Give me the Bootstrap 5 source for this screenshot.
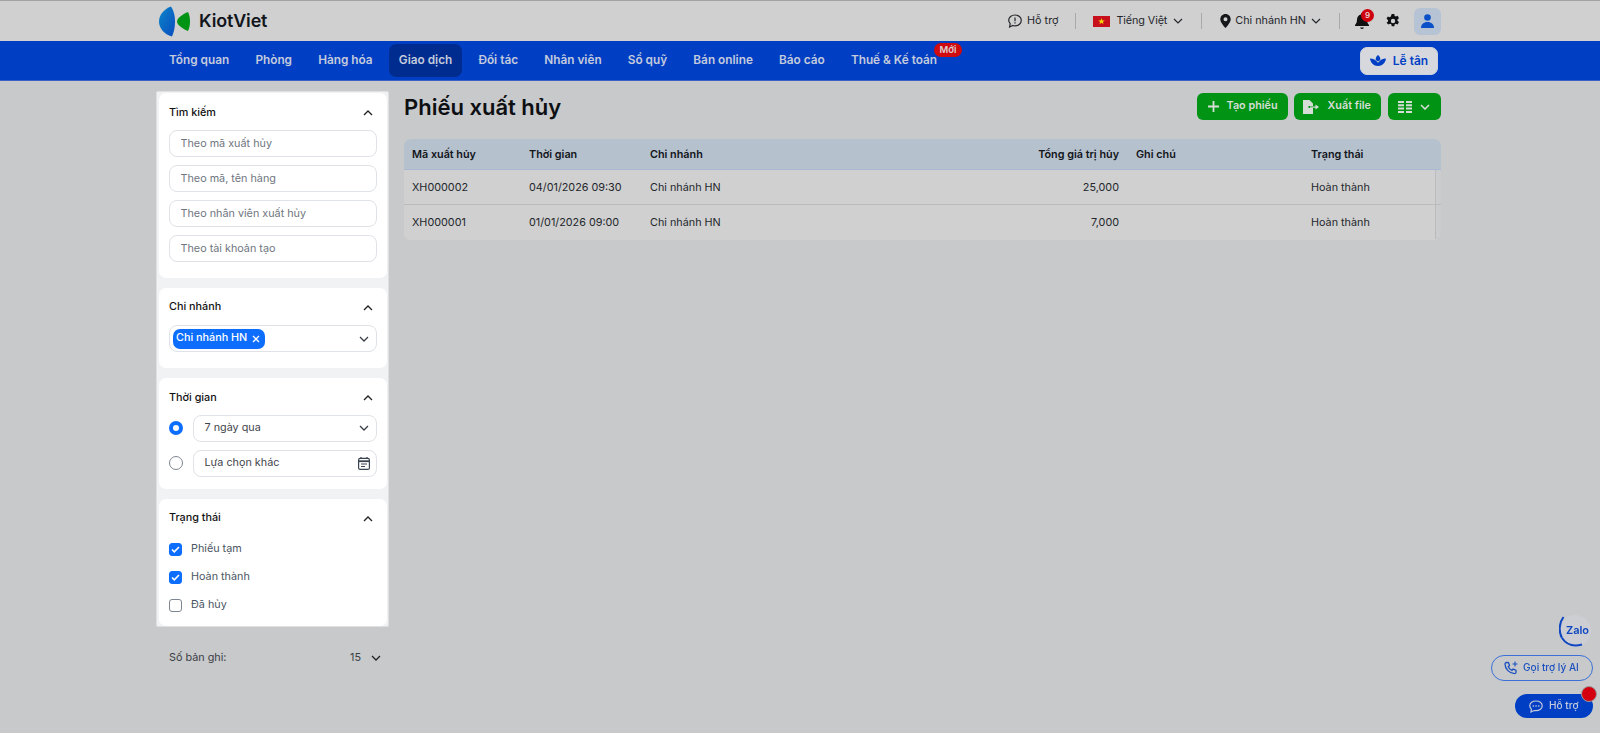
<!DOCTYPE html>
<html lang="vi"><head><meta charset="utf-8"><title>Phiếu xuất hủy</title>
<link href="https://cdn.jsdelivr.net/npm/bootstrap@5.3.0/dist/css/bootstrap.min.css" rel="stylesheet">
<style>
html,body{height:733px;overflow:hidden}
body{background:#c8c9cb;font-family:Inter,"Liberation Sans",sans-serif;font-size:10.8px;color:#1a1c20}
.wrap{width:1284px;margin-left:157px}
.topbar{height:41px;background:#d0d0d0;border-top:1px solid #a3a3a3}
.logo-text{font-size:17.900px;font-weight:600;color:#12161c;letter-spacing:-.1px}
.top-sep{width:1px;height:16px;background:#a9a9a9}
.top-item{font-size:10.8px;color:#24262b}
.avatar{width:27px;height:27px;border-radius:6px;background:#b6c3d4}
.notif{position:absolute;top:-4px;right:-5px;width:13px;height:13px;border-radius:50%;background:#d0000f;color:#e5d5d5;font-size:8px;font-weight:600;line-height:13px;text-align:center}
.mainnav{height:40px;background:#003fc4;border-bottom:1px solid #3c62c8}
.nav-lnk{padding:0 10px;height:33px;line-height:33px;font-size:11.800px;font-weight:600;color:#c4cbdc;border-radius:7px;margin-right:6.200px;position:relative;white-space:nowrap;text-decoration:none}
.nav-lnk.on{background:#002c90}
.new-tag{position:absolute;top:-1px;right:-15px;height:14px;width:28px;border-radius:8px;background:#cf0b10;color:#dccfd0;font-size:9.500px;font-weight:600;line-height:14px;text-align:center}
.recep{width:78px;height:28px;margin-right:3px;background:#d6d8de;border-radius:7px;color:#003fc4;font-size:12px;font-weight:600;border:1px solid #cdd2dc}
.side{width:233px;flex:none;margin-left:-1px}
.side-box{background:#f1f2f4;padding:1px 1px 0 2px;border:1px solid #dfe0e2;border-radius:2px}
.pane{background:#fff;border-radius:7px;padding:12px 10px;margin-bottom:10px}
.pane:last-child{margin-bottom:0}
.pane-h{display:flex;justify-content:space-between;align-items:center;font-weight:500;color:#111;font-size:10.8px;height:14px;padding:2px 4px 0 0;margin-bottom:10.500px}
.fld{height:27px;border:1px solid #dfe2e6;border-radius:8px;padding:0 7px 0 10.5px;color:#6f7680;font-size:10.8px;margin-bottom:8px;display:flex;align-items:center;justify-content:space-between;background:#fff;box-shadow:none}
.fld::placeholder{color:#6f7680;opacity:1}
.fld:focus{border-color:#dfe2e6;box-shadow:none}
.fld-dark{color:#3f444c}
.tag{background:#0d6efd;color:#fff;font-weight:500;height:20px;border-radius:7px;padding:0 5px 0 3px;display:flex;align-items:center;gap:5px}
.rad{width:14px;height:14px;border-radius:50%;border:1px solid #7d8590;flex:none}
.rad.on{border:4px solid #0d6efd}
.rad-row{display:flex;align-items:center;gap:10px;margin-bottom:8px}
.rad-row:last-child{margin-bottom:0}
.rad-row .fld{margin-bottom:0;flex-grow:1}
.chk{width:13px;height:13px;border-radius:3px;border:1px solid #7d8590;flex:none;background:#fff;display:flex;align-items:center;justify-content:center}
.chk.on{background:#0d6efd;border-color:#0d6efd}
.chk-row{display:flex;align-items:center;gap:9px;height:14px;margin-bottom:13.800px;color:#4b5563}
.chk-row:last-child{margin-bottom:0}
.pager{height:14px;margin-top:24px;padding:0 8px 0 13px;color:#3a3e45}
.main-col{margin-left:15px;flex:1;padding-top:2px}
.ptitle{font-size:22px;font-weight:600;color:#0d0f12;line-height:27px;margin:1px 0 0}
.gbtn{height:27px;border-radius:6px;background:#009314;color:#d6ddd6;font-size:10.8px;font-weight:600;border:0;padding:0 10px;display:flex;align-items:center;gap:8px;white-space:nowrap}
.tbl-box{margin-top:19px;border-radius:7px;overflow:hidden;background:#d0d0d0;height:101px}
.tbl{table-layout:fixed;width:1037px;margin:0;--bs-table-bg:transparent;font-size:10.8px}
.tbl th{height:30px;background:#b6c1ce;font-weight:600;color:#12151a;padding:3px 8px 0;vertical-align:middle;border-bottom:1px solid #aab8d2}
.tbl td{height:35px;padding:3px 8px 0;color:#24272c;vertical-align:middle;border-bottom:1px solid #b9bbbf;background:#d0d0d0}
.tbl th:nth-child(n+5),.tbl td:nth-child(n+5){padding-left:9px}
.tbl tr:last-child td{border-bottom:0}
.tbl td:last-child{box-shadow:inset -5px 0 0 #cbcccd,inset -6px 0 0 #b9bbbf}
.zalo{position:fixed;left:1559px;top:615px;width:32px;height:32px;border-radius:50%;background:#cdced3}
.zalo span{position:absolute;left:7px;top:8px;color:#0f47c0;font-size:11px;font-weight:600;line-height:14px}
.ai-btn{position:fixed;left:1491px;top:655px;width:102px;height:26px;border:1px solid #3a70d8;border-radius:13px;color:#1a50c0;font-size:10.1px;font-weight:500;display:flex;align-items:center;gap:4px;padding-left:12px}
.help-btn{position:fixed;left:1515px;top:694px;width:78px;height:24px;border-radius:12px;background:#003fc4;color:#c4cbdc;font-size:10.1px;font-weight:500;display:flex;align-items:center;gap:6px;padding-left:14px}
.dot{position:absolute;right:-4px;top:-8px;width:16px;height:16px;border-radius:50%;background:#d5000f;border:1px solid #9a9a9a}
</style></head><body>
<div class="topbar"><div class="wrap d-flex align-items-center h-100">
 <div class="d-flex align-items-center" style="gap:9px;margin-left:2px">
  <svg width="31" height="31" viewBox="0 0 31 31"><defs><linearGradient id="g1" x1="0" y1="0" x2="1" y2="1"><stop offset="0" stop-color="#0a86c8"/><stop offset="1" stop-color="#0a4cc0"/></linearGradient></defs><path d="M12 .5C15 5 16 10 16 15.500S15 26 13 30.500C5 28.500 0 22 0 15.500S5 3 12 .5Z" fill="url(#g1)"/><path d="M29 6c1.500 3 2 6.500 2 9.500s-.5 6.500-2 9.500c-5-2-11-6-11-9.500S24 8 29 6Z" fill="#009314"/></svg>
  <span class="logo-text">KiotViet</span>
 </div>
 <div class="ms-auto d-flex align-items-center top-item">
  <svg width="14" height="14" viewBox="0 0 14 14" fill="none" stroke="#24262b" stroke-width="1.200"><path d="M7 1C3.500 1 .7 3.300.7 6.300c0 1.300.6 2.500 1.500 3.400L1.600 13l3.200-1.500c.7.200 1.400.300 2.200.300 3.500 0 6.300-2.400 6.300-5.500S10.500 1 7 1Z"/><path d="M7 3.500v3.700M7 8.300v1.300"/></svg>
  <span style="margin-left:5px">Hỗ trợ</span>
  <span class="top-sep" style="margin:0 17px 0 17px"></span>
  <svg width="17" height="11" viewBox="0 0 17 11"><rect width="17" height="11" fill="#c8101c"/><path d="M8.500 2l.8 2.400h2.500l-2 1.500.8 2.400-2.100-1.500-2.100 1.500.8-2.400-2-1.500h2.500Z" fill="#f5d90a"/></svg>
  <span style="margin-left:6px;letter-spacing:-.1px">Tiếng Việt</span>
  <svg style="margin-left:6px" width="10" height="6" viewBox="0 0 10 6" fill="none" stroke="#24262b" stroke-width="1.200"><path d="M1 1l4 4 4-4"/></svg>
  <span class="top-sep" style="margin:0 18px 0 18px"></span>
  <svg width="11" height="14" viewBox="0 0 11 14"><path fill-rule="evenodd" d="M5.500 0C2.500 0 .3 2.300.3 5.200.3 8.800 5.500 14 5.500 14s5.200-5.200 5.200-8.800C10.700 2.300 8.500 0 5.500 0Zm0 7.200a2 2 0 1 1 0-4 2 2 0 0 1 0 4Z" fill="#15171a"/></svg>
  <span style="margin-left:4px">Chi nhánh HN</span>
  <svg style="margin-left:5px" width="10" height="6" viewBox="0 0 10 6" fill="none" stroke="#24262b" stroke-width="1.200"><path d="M1 1l4 4 4-4"/></svg>
  <span class="top-sep" style="margin:0 15px 0 18px"></span>
  <span class="position-relative d-block" style="width:14px;height:16px">
   <svg width="14" height="16" viewBox="0 0 14 16" class="d-block"><path d="M7 0a1 1 0 0 1 1 1v.6c2.300.4 4 2.400 4 4.900 0 3.500 1.300 4.600 2 5.500v1H0v-1c.7-.9 2-2 2-5.500 0-2.500 1.700-4.500 4-4.900V1a1 1 0 0 1 1-1ZM5 14.500h4A2 2 0 0 1 7 16a2 2 0 0 1-2-1.500Z" fill="#111"/></svg>
   <span class="notif">9</span>
  </span>
  <svg style="margin-left:17px" width="14" height="14" viewBox="0 0 16 16"><path fill-rule="evenodd" d="M6.500 0h3l.4 2.200 1.300.7 2.100-.8 1.500 2.700-1.700 1.400v1.600l1.700 1.400-1.500 2.700-2.100-.8-1.300.7-.4 2.200h-3l-.4-2.200-1.300-.7-2.100.8L.6 9.900l1.700-1.400V6.900L.6 5.500l1.500-2.700 2.100.8 1.300-.7ZM8 5.500a2.500 2.500 0 1 0 0 5 2.500 2.500 0 0 0 0-5Z" fill="#0f1013"/></svg>
  <span class="avatar d-flex align-items-center justify-content-center" style="margin-left:14px">
   <svg width="13" height="14" viewBox="0 0 13 14" fill="#0a50c8"><circle cx="6.500" cy="3.500" r="3.300"/><path d="M0 14c0-3.500 2.500-6 6.500-6s6.500 2.500 6.500 6Z"/></svg>
  </span>
 </div>
</div></div>
<nav class="mainnav"><div class="wrap d-flex align-items-center h-100" style="padding-left:2px">
 <a class="nav-lnk">Tổng quan</a><a class="nav-lnk">Phòng</a><a class="nav-lnk">Hàng hóa</a><a class="nav-lnk on">Giao dịch</a><a class="nav-lnk">Đối tác</a><a class="nav-lnk">Nhân viên</a><a class="nav-lnk">Sổ quỹ</a><a class="nav-lnk">Bán online</a><a class="nav-lnk">Báo cáo</a><a class="nav-lnk">Thuế &amp; Kế toán<span class="new-tag">Mới</span></a>
 <div class="ms-auto recep d-flex align-items-center justify-content-center" style="gap:7px">
  <svg width="16" height="11" viewBox="0 0 16 11" fill="#003fc4"><path d="M8 0c1.700 1.300 2.500 3 2.300 5L8 6.500 5.700 5C5.500 3 6.300 1.300 8 0Z"/><path d="M0 3.500c3 0 6 1.500 8 4.300 2-2.800 5-4.300 8-4.300-.4 4-3.700 7.500-8 7.500S.4 7.500 0 3.500Z"/></svg>Lễ tân
 </div>
</div></nav>
<div class="wrap d-flex" style="margin-top:10px">
 <aside class="side">
  <div class="side-box">
   <div class="pane">
    <div class="pane-h">Tìm kiếm <svg width="10" height="6" viewBox="0 0 10 6" fill="none" stroke="#222" stroke-width="1.300"><path d="M1 5l4-4 4 4"/></svg></div>
    <input class="form-control fld" placeholder="Theo mã xuất hủy"><input class="form-control fld" placeholder="Theo mã, tên hàng"><input class="form-control fld" placeholder="Theo nhân viên xuất hủy"><input class="form-control fld" placeholder="Theo tài khoản tạo" style="margin-bottom:4px">
   </div>
   <div class="pane" style="padding-bottom:16px">
    <div class="pane-h" style="margin-bottom:11.500px">Chi nhánh <svg width="10" height="6" viewBox="0 0 10 6" fill="none" stroke="#222" stroke-width="1.300"><path d="M1 5l4-4 4 4"/></svg></div>
    <div class="fld mb-0" style="padding-left:3px"><span class="tag">Chi nhánh HN <svg width="8" height="8" viewBox="0 0 8 8" stroke="#fff" stroke-width="1.300"><path d="M1 1l6 6M7 1L1 7"/></svg></span><svg width="10" height="6" viewBox="0 0 10 6" fill="none" stroke="#3a3e45" stroke-width="1.300"><path d="M1 1l4 4 4-4"/></svg></div>
   </div>
   <div class="pane">
    <div class="pane-h">Thời gian <svg width="10" height="6" viewBox="0 0 10 6" fill="none" stroke="#222" stroke-width="1.300"><path d="M1 5l4-4 4 4"/></svg></div>
    <div class="rad-row"><span class="rad on"></span><div class="fld fld-dark">7 ngày qua <svg width="10" height="6" viewBox="0 0 10 6" fill="none" stroke="#3a3e45" stroke-width="1.300"><path d="M1 1l4 4 4-4"/></svg></div></div>
    <div class="rad-row"><span class="rad"></span><div class="fld fld-dark" style="padding-right:6px">Lựa chọn khác <svg width="12" height="14" viewBox="0 0 12 14" fill="none" stroke="#3a4450" stroke-width="1.200"><rect x=".6" y="2.400" width="10.800" height="11" rx="1.500"/><path d="M.6 5.200h10.800" stroke-width="1.800"/><path d="M3 1v2M9 1v2M3 8h6M3 10.500h4"/></svg></div></div>
   </div>
   <div class="pane" style="padding-bottom:14px">
    <div class="pane-h" style="margin-bottom:18px">Trạng thái <svg width="10" height="6" viewBox="0 0 10 6" fill="none" stroke="#222" stroke-width="1.300"><path d="M1 5l4-4 4 4"/></svg></div>
    <div class="chk-row"><span class="chk on"><svg width="9" height="7" viewBox="0 0 9 7" fill="none" stroke="#fff" stroke-width="1.600"><path d="M1 3.500l2.300 2.300L8 1"/></svg></span>Phiếu tạm</div>
    <div class="chk-row"><span class="chk on"><svg width="9" height="7" viewBox="0 0 9 7" fill="none" stroke="#fff" stroke-width="1.600"><path d="M1 3.500l2.300 2.300L8 1"/></svg></span>Hoàn thành</div>
    <div class="chk-row"><span class="chk"></span>Đã hủy</div>
   </div>
  </div>
  <div class="pager d-flex align-items-center justify-content-between"><span>Số bản ghi:</span><span class="d-flex align-items-center" style="gap:10px">15 <svg width="10" height="6" viewBox="0 0 10 6" fill="none" stroke="#222" stroke-width="1.300"><path d="M1 1l4 4 4-4"/></svg></span></div>
 </aside>
 <main class="main-col">
  <div class="d-flex align-items-center justify-content-between" style="height:27px">
   <h1 class="ptitle">Phiếu xuất hủy</h1>
   <div class="d-flex" style="gap:6px">
    <button class="gbtn" style="padding:0 10px 0 11px"><svg width="11" height="11" viewBox="0 0 11 11" stroke="#d6ddd6" stroke-width="1.800"><path d="M5.500 0v11M0 5.500h11"/></svg>Tạo phiếu</button>
    <button class="gbtn me-1" style="gap:9px;padding:0 10px 0 9px;margin-right:1px !important"><svg width="16" height="14" viewBox="0 0 16 14" fill="#d6ddd6"><path d="M0 0h6.500l3.500 3.500V6H5.500v2H10v6H0Z"/><path d="M7 6.400h5.500V4.500L16 7l-3.500 2.500V7.700H7Z"/></svg>Xuất file</button>
    <button class="gbtn" style="padding:0 11px 0 10px"><svg width="14" height="12" viewBox="0 0 14 12" fill="#d6ddd6"><path d="M0 0h6v2H0ZM8 0h6v2H8ZM0 3.300h6v2H0ZM8 3.300h6v2H8ZM0 6.600h6v2H0ZM8 6.600h6v2H8ZM0 10h6v2H0ZM8 10h6v2H8Z"/></svg><svg width="10" height="6" viewBox="0 0 10 6" fill="none" stroke="#d6ddd6" stroke-width="1.600"><path d="M1 1l4 4 4-4"/></svg></button>
   </div>
  </div>
  <div class="tbl-box">
   <table class="table tbl">
    <colgroup><col style="width:117px"><col style="width:121px"><col style="width:250px"><col style="width:235px"><col style="width:175px"><col style="width:139px"></colgroup>
    <thead><tr><th>Mã xuất hủy</th><th>Thời gian</th><th>Chi nhánh</th><th class="text-end">Tổng giá trị hủy</th><th>Ghi chú</th><th>Trạng thái</th></tr></thead>
    <tbody>
     <tr><td>XH000002</td><td>04/01/2026 09:30</td><td>Chi nhánh HN</td><td class="text-end">25,000</td><td></td><td>Hoàn thành</td></tr>
     <tr><td>XH000001</td><td>01/01/2026 09:00</td><td>Chi nhánh HN</td><td class="text-end">7,000</td><td></td><td>Hoàn thành</td></tr>
    </tbody>
   </table>
  </div>
 </main>
</div>
<div class="zalo"><span>Zalo</span><svg class="d-block" width="32" height="32" viewBox="0 0 32 32" fill="none" stroke="#0f47c0"><path d="M4.500 2C0 8 -.5 17 3 23" stroke-width="2"/><path d="M3 23c4 6 11 9 20 6.500" stroke-width="2"/></svg></div>
<div class="ai-btn"><svg width="15" height="15" viewBox="0 0 15 15" fill="none" stroke="#1a50c0" stroke-width="1.300"><path d="M2.500 1.500l2 .2 1 2.800-1.300 1.200c.8 1.700 2 2.900 3.700 3.700l1.200-1.300 2.800 1 .2 2c0 .8-.7 1.500-1.500 1.500C5.500 12.500 1 8 1 3c0-.8.700-1.500 1.500-1.500Z"/><path d="M11 .5v5M8.500 3h5" stroke-width="1.100"/></svg>Gọi trợ lý AI</div>
<div class="help-btn"><svg width="14" height="13" viewBox="0 0 14 13" fill="none" stroke="#c4cbdc" stroke-width="1.200"><path d="M7 1C3.500 1 .8 3 .8 5.800c0 1.300.6 2.500 1.600 3.300L2 12l3-1.500c.6.100 1.300.2 2 .2 3.500 0 6.200-2.100 6.200-4.900S10.500 1 7 1Z"/><path d="M4.300 6h.1M7 6h.1M9.700 6h.1" stroke-width="1.600" stroke-linecap="round"/></svg>Hỗ trợ<span class="dot"></span></div>
</body></html>
